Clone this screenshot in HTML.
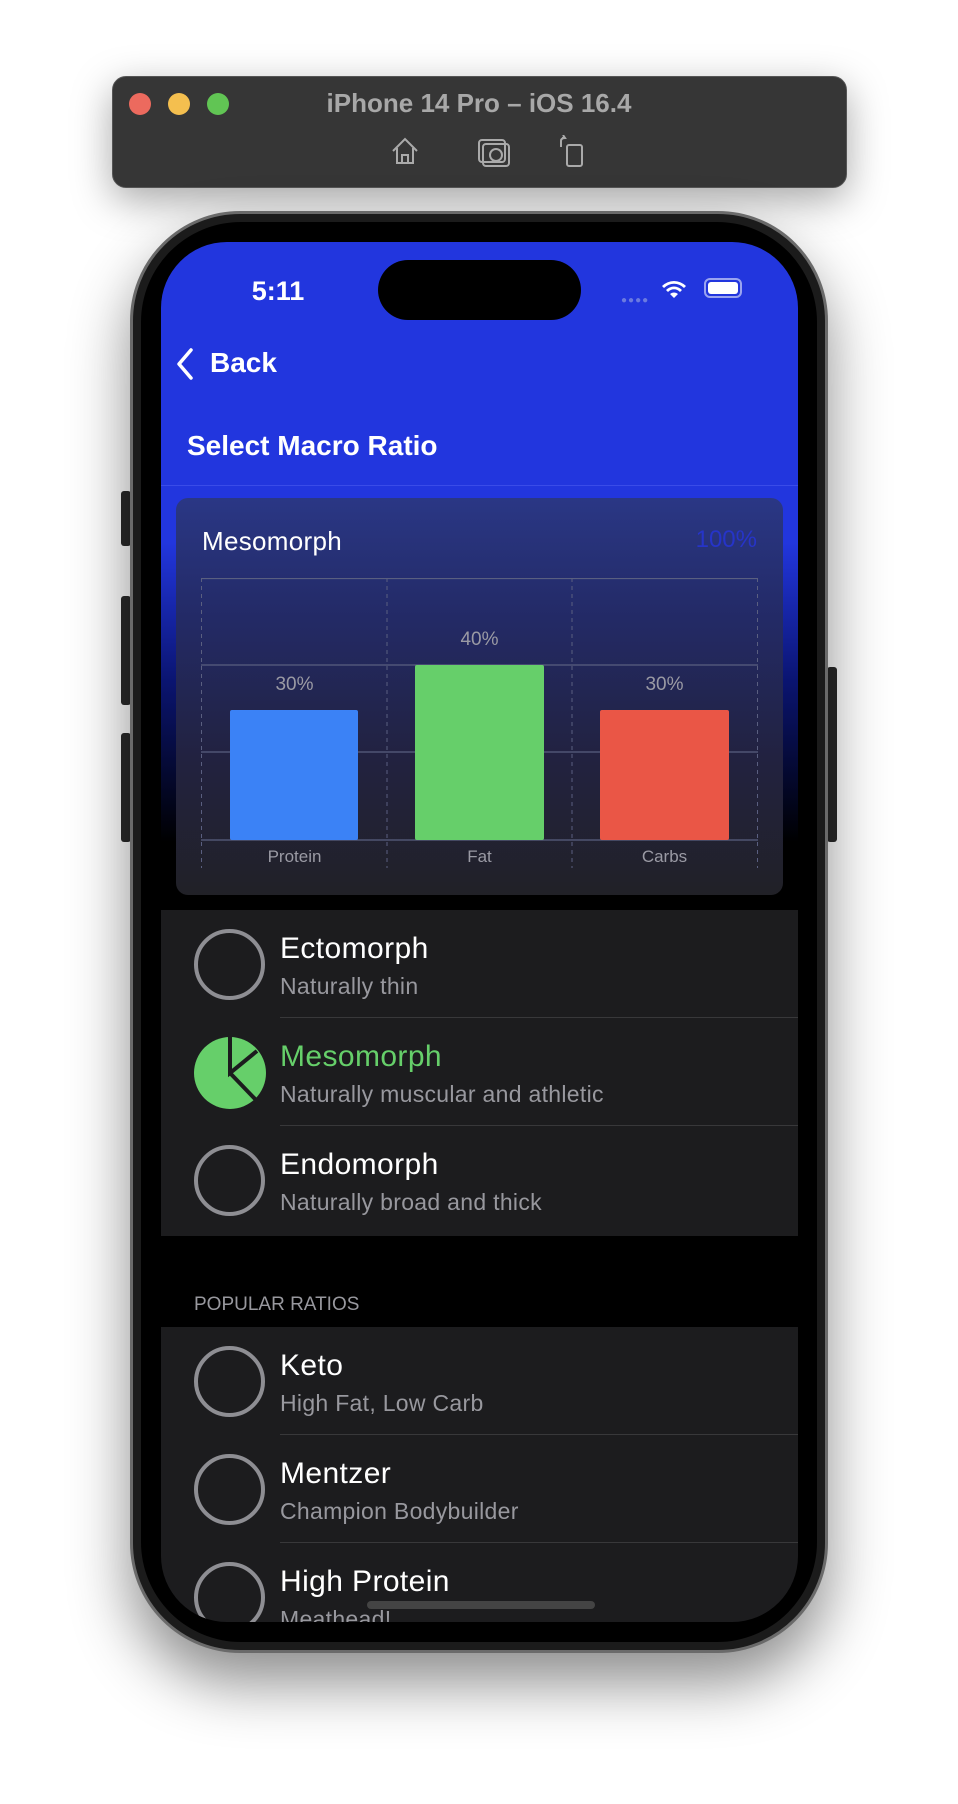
<!DOCTYPE html>
<html><head><meta charset="utf-8"><style>
*{margin:0;padding:0;box-sizing:border-box}
body{width:958px;height:1804px;background:#fff;position:relative;overflow:hidden;font-family:"Liberation Sans",sans-serif}
.a{position:absolute}
.bar{left:112px;top:76px;width:735px;height:112px;background:#363636;border-radius:14px;box-shadow:0 12px 40px rgba(0,0,0,.35);border:1px solid #555}
.dot{width:22px;height:22px;border-radius:50%;top:93px}
.phone{left:130px;top:211px;width:698px;height:1442px;border-radius:110px;background:#1b1b1b;border:3px solid #6a6a6a;box-shadow:0 30px 60px rgba(0,0,0,.45)}
.inner{left:141px;top:222px;width:676px;height:1420px;border-radius:100px;background:#000}
.screen{left:161px;top:242px;width:637px;height:1380px;border-radius:66px;overflow:hidden;background:#000}
.btn{background:#2a2a2a;border-radius:3px}
.row{position:absolute;left:0;width:637px;height:108px}
.circ{position:absolute;left:33px;width:71px;height:71px;border-radius:50%;border:4.5px solid #8e8e93;top:19px}
.t{position:absolute;left:119px;top:22px;font-size:30px;color:#fff;letter-spacing:0.4px}
.s{position:absolute;left:119px;top:63px;font-size:23px;color:#98989e;letter-spacing:0.3px}
.sep{position:absolute;left:119px;right:0;bottom:0;height:1px;background:#38383a}
.lbl{position:absolute;font-size:17px;color:#9a9aa4;text-align:center;width:129px}
</style></head><body>
<div class="a bar"></div>
<div class="a dot" style="left:129px;background:#ec6a5e"></div>
<div class="a dot" style="left:168px;background:#f4bf4f"></div>
<div class="a dot" style="left:207px;background:#61c554"></div>
<div class="a" style="left:254px;top:88px;width:450px;text-align:center;color:#a8a8a8;font-weight:bold;font-size:26px">iPhone 14 Pro – iOS 16.4</div>
<svg class="a" style="left:389px;top:135px" width="32" height="32" viewBox="0 0 32 32" fill="none" stroke="#aaa" stroke-width="2"><path d="M4 16 L16 4 L28 16 M8 13 V28 H24 V13 M13 28 V20 H19 V28"/></svg>
<svg class="a" style="left:477px;top:136px" width="34" height="32" viewBox="0 0 34 32" fill="none" stroke="#aaa" stroke-width="2"><rect x="2" y="4" width="26" height="22" rx="3"/><rect x="6" y="8" width="26" height="22" rx="3"/><circle cx="19" cy="19" r="6"/></svg>
<svg class="a" style="left:557px;top:135px" width="30" height="34" viewBox="0 0 30 34" fill="none" stroke="#aaa" stroke-width="2"><rect x="10" y="10" width="15" height="21" rx="2"/><path d="M4 12 V6 Q4 3 8 3 M5 3 L8 3 L6 0"/></svg>

<div class="a btn" style="left:121px;top:491px;width:10px;height:55px"></div>
<div class="a btn" style="left:121px;top:596px;width:10px;height:109px"></div>
<div class="a btn" style="left:121px;top:733px;width:10px;height:109px"></div>
<div class="a btn" style="left:827px;top:667px;width:10px;height:175px"></div>
<div class="a phone"></div>
<div class="a inner"></div>
<div class="a screen">
  <div class="a" style="left:0;top:0;width:637px;height:760px;background:linear-gradient(#2236de 0,#2236de 300px,#0a1470 440px,#000 600px)"></div>
  <div class="a" style="left:0;top:243px;width:637px;height:1px;background:#3a4ce8"></div>
  <div class="a" style="left:0;top:34px;width:234px;text-align:center;color:#fff;font-size:27px;font-weight:bold">5:11</div>
  <div class="a" style="left:217px;top:18px;width:203px;height:60px;border-radius:30px;background:#000"></div>
  <div class="a" style="left:460px;top:53px;color:#6b7ae0;font-size:10px;letter-spacing:1px">●●●●</div>
  <svg class="a" style="left:500px;top:36px" width="26" height="22" viewBox="0 0 26 22"><path d="M13 20 L9 16 A6 6 0 0 1 17 16 Z M5 12 A11 11 0 0 1 21 12 L19 14 A8 8 0 0 0 7 14 Z M1 8 A17 17 0 0 1 25 8 L23 10 A14 14 0 0 0 3 10 Z" fill="#fff"/></svg>
  <div class="a" style="left:543px;top:36px;width:38px;height:20px;border:2px solid #9aa4f0;border-radius:6px;padding:2px"><div style="width:100%;height:100%;background:#fff;border-radius:3px"></div></div>
  <svg class="a" style="left:14px;top:105px" width="20" height="34" viewBox="0 0 20 34"><path d="M16 3 L4 17 L16 31" fill="none" stroke="#fff" stroke-width="3.5" stroke-linecap="round" stroke-linejoin="round"/></svg>
  <div class="a" style="left:49px;top:105px;color:#fff;font-size:28px;font-weight:bold">Back</div>
  <div class="a" style="left:26px;top:188px;color:#fff;font-size:28px;font-weight:bold">Select Macro Ratio</div>

  <div class="a" style="left:15px;top:256px;width:607px;height:397px;border-radius:12px;background:linear-gradient(#2a3785,#232a66 120px,#222240 260px,#212127)"></div>
  <div class="a" style="left:41px;top:284px;color:#fff;font-size:26px;letter-spacing:0.3px">Mesomorph</div>
  <div class="a" style="left:510px;top:284px;width:86px;text-align:right;color:#2634c8;font-size:24px">100%</div>
  <svg class="a" style="left:40px;top:336px" width="557" height="290">
    <g stroke="#5a5f80" stroke-width="1.2">
      <line x1="0" y1="0.5" x2="557" y2="0.5"/><line x1="0" y1="87" x2="557" y2="87"/><line x1="0" y1="174" x2="557" y2="174"/><line x1="0" y1="262" x2="557" y2="262"/>
    </g>
    <g stroke="#5a5f80" stroke-width="1" stroke-dasharray="4,4">
      <line x1="0.5" y1="0" x2="0.5" y2="290"/><line x1="186" y1="0" x2="186" y2="290"/><line x1="371" y1="0" x2="371" y2="290"/><line x1="556.5" y1="0" x2="556.5" y2="290"/>
    </g>
    <rect x="29" y="132" width="128" height="130" rx="2" fill="#3b82f6"/>
    <rect x="214" y="87" width="129" height="175" rx="2" fill="#66cf6a"/>
    <rect x="399" y="132" width="129" height="130" rx="2" fill="#ea5646"/>
  </svg>
  <div class="lbl" style="left:69px;top:432px;font-size:19px">30%</div>
  <div class="lbl" style="left:254px;top:387px;font-size:19px">40%</div>
  <div class="lbl" style="left:439px;top:432px;font-size:19px">30%</div>
  <div class="lbl" style="left:69px;top:605px">Protein</div>
  <div class="lbl" style="left:254px;top:605px">Fat</div>
  <div class="lbl" style="left:439px;top:605px">Carbs</div>

  <div class="a" style="left:0;top:668px;width:637px;height:326px;background:#1c1c1e">
    <div class="row" style="top:0"><div class="circ"></div><div class="t">Ectomorph</div><div class="s">Naturally thin</div><div class="sep"></div></div>
    <div class="row" style="top:108px">
      <svg style="position:absolute;left:33px;top:19px" width="72" height="72" viewBox="0 0 72 72"><circle cx="36" cy="36" r="36" fill="#66cf6a"/><path d="M36 0 V36 L63 14" fill="none" stroke="#1c1c1e" stroke-width="4"/><path d="M36 36 L62 63" fill="none" stroke="#1c1c1e" stroke-width="4"/></svg>
      <div class="t" style="color:#66cf6a">Mesomorph</div><div class="s">Naturally muscular and athletic</div><div class="sep"></div></div>
    <div class="row" style="top:216px"><div class="circ"></div><div class="t">Endomorph</div><div class="s">Naturally broad and thick</div></div>
  </div>
  <div class="a" style="left:33px;top:1052px;color:#98989e;font-size:19px">POPULAR RATIOS</div>
  <div class="a" style="left:0;top:1085px;width:637px;height:320px;background:#1c1c1e">
    <div class="row" style="top:0"><div class="circ"></div><div class="t">Keto</div><div class="s">High Fat, Low Carb</div><div class="sep"></div></div>
    <div class="row" style="top:108px"><div class="circ"></div><div class="t">Mentzer</div><div class="s">Champion Bodybuilder</div><div class="sep"></div></div>
    <div class="row" style="top:216px"><div class="circ"></div><div class="t">High Protein</div><div class="s">Meathead!</div></div>
  </div>
  <div class="a" style="left:206px;top:1359px;width:228px;height:8px;border-radius:4px;background:#444"></div>
</div>
</body></html>
